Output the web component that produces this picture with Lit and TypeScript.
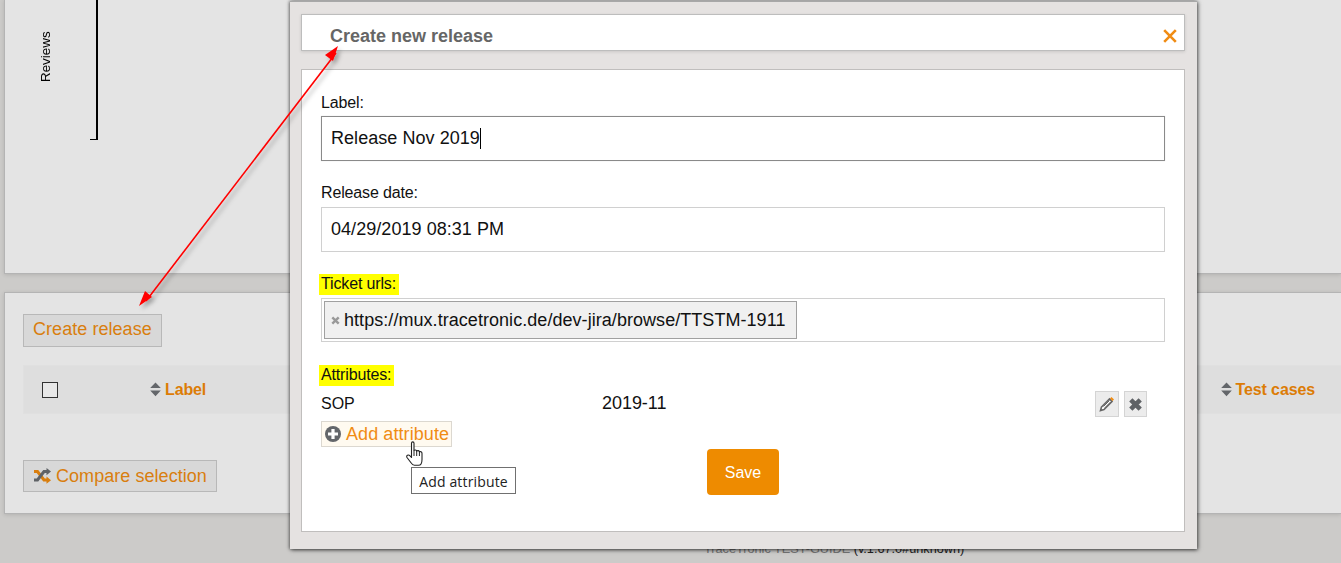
import { LitElement, html, css, svg } from "lit";
import { customElement } from "lit/decorators.js";

const sortIcon = html`<svg class="sort" width="11" height="15" viewBox="0 0 11 15"><path d="M5.5 0.5 L10.8 6 H0.2 Z M0.2 8.6 H10.8 L5.5 14.2 Z" fill="#63666a"/></svg>`;

@customElement("app-root")
export class AppRoot extends LitElement {
  static styles = css`
    :host { display: block; }
    * { box-sizing: border-box; }
    .page {
      position: relative; width: 1341px; height: 563px; overflow: hidden;
      background: #cccbc9; font-family: "Liberation Sans", Arial, sans-serif; color: #000;
      padding-left: 4px; display: flex; flex-direction: column;
    }
    .panel { background: #e4e4e4; border: 1px solid #b4b4b4; border-right: none; box-shadow: 0 1px 4px rgba(0,0,0,.12); }
    .top { height: 275px; margin-top: -1px; border-top: none; position: relative; display: flex; flex: none; }
    .axis { width: 93px; height: 141px; border-right: 2px solid #000; position: relative; flex: none; }
    .tick { position: absolute; right: -2px; bottom: 0; width: 8px; height: 1px; background: #000; }
    .reviews {
      position: absolute; left: 33px; top: 30px; height: 53px; writing-mode: vertical-rl; transform: rotate(180deg);
      font-size: 13.4px; line-height: 16px; text-align: left;
    }
    .bottom { height: 222px; flex: none; margin-top: 18px; padding: 21px 0 0 18px; display: flex; flex-direction: column; align-items: flex-start; }
    .btn {
      background: #d8d8d8; border: 1px solid #b8b8b8; color: #d97e0e; font-size: 18px; line-height: 20px;
      letter-spacing: .05px; display: flex; align-items: center;
    }
    .create { height: 33px; padding: 0 9px 4px 9px; }
    .thead {
      margin-top: 18px; width: 100%; height: 49px; background: #dedede; border: 1px solid #e0e0e0; border-right: none;
      display: flex; align-items: center; position: relative;
    }
    .check { width: 16px; height: 16px; border: 1px solid #333; background: #e8e8e8; margin-left: 18px; flex: none; }
    .th { display: flex; align-items: center; gap: 4px; font-weight: 700; font-size: 16px; letter-spacing: -.12px; color: #dc7c06; }
    .th-label { margin-left: 92px; }
    .th-tests { margin-left: auto; margin-right: 26px; }
    .compare { margin-top: 46px; height: 32px; padding: 0 9px; gap: 5px; }

    .footer { position: absolute; left: 704px; top: 542px; font-size: 12.7px; line-height: 14px; white-space: nowrap; color: #222; }
    .footer .dim { color: #777; }

    .modal {
      position: absolute; left: 290px; top: 1px; width: 907px; height: 548px; background: #e5e2e1;
      border-top: 1px solid #a8a8a8; box-shadow: 1px 1px 4px rgba(0,0,0,.65), -1px 0 3px rgba(0,0,0,.35);
      padding: 12px 12px 17px 11px; display: flex; flex-direction: column; gap: 18px;
    }
    .head {
      height: 37px; flex: none; background: #fff; border: 1px solid #bdbdbd; display: flex; align-items: center;
      justify-content: space-between; padding: 7px 7px 0 28px; box-shadow: 0 1px 3px rgba(0,0,0,.12);
    }
    .title { font-size: 18px; font-weight: 700; color: #666; }
    .body {
      flex: 1; background: #fff; border: 1px solid #c0bebd; padding: 24px 19px 0 19px; display: flex; flex-direction: column;
    }
    .lab { font-size: 16px; line-height: 18px; color: #111; align-self: flex-start; letter-spacing: -.15px; }
    .mark { background: #ffff00; padding: 2px 3px 3px 2px; margin-left: -2px; line-height: 16px; }
    .input {
      margin-top: 5px; height: 45px; border: 1px solid #d0d0d0; display: flex; align-items: center; padding-left: 9px;
      font-size: 18px; letter-spacing: .05px; color: #111; flex: none;
    }
    .input.focus { border-color: #8a8a8a; margin-top: 4px; box-shadow: 0 0 1px rgba(0,0,0,.15); }
    .caret { width: 1px; height: 21px; background: #000; margin-left: 0; }
    .sec2 { margin-top: 23px; }
    .sec3 { margin-top: 22px; }
    .ticket { height: 44px; padding-left: 2px; margin-top: 3px; }
    .chip {
      height: 38px; border: 1px solid #a0a0a0; background: #f0f0f0; display: flex; align-items: center;
      padding: 0 11px 0 6px; gap: 4px; font-size: 18px; white-space: nowrap;
    }
    .sec4 { margin-top: 23px; }
    .row { margin-top: 4px; height: 28px; display: flex; align-items: center; position: relative; font-size: 16px; color: #111; }
    .k { width: 281px; }
    .v { font-size: 18px; letter-spacing: -.05px; padding-bottom: 2px; }
    .actions { margin-left: auto; margin-right: 18px; display: flex; gap: 5px; }
    .act {
      height: 26px; background: #ececec; border: 1px solid #d4d4d4; display: flex; align-items: center; justify-content: center;
    }
    .act-edit { width: 24px; }
    .act-del { width: 23px; }
    .add {
      margin-top: 3px; align-self: flex-start; height: 26px; width: 131px; border: 1px solid #dcd8d0; background: #fffaf0;
      color: #f08c14; font-size: 18px; letter-spacing: .08px; display: flex; align-items: center; padding-left: 3px; gap: 5px; white-space: nowrap;
    }
    .save {
      margin-top: 2px; margin-left: 386px; width: 72px; height: 46px; border-radius: 4px; background: #ee8b00; color: #fff;
      font-size: 16px; padding-top: 1px; display: flex; align-items: center; justify-content: center; align-self: flex-start;
    }
    .tooltip {
      position: absolute; left: 411px; top: 467px; width: 105px; height: 27px; background: #fff; border: 1px solid #707070;
      font-family: "Open Sans", "Noto Sans", sans-serif; font-size: 14px; letter-spacing: .15px; padding-top: 1px;
      display: flex; align-items: center; justify-content: center; color: #222;
    }
    .cursor { position: absolute; left: 404px; top: 440px; }
    .overlay { position: absolute; left: 0; top: 0; pointer-events: none; }
  `;

  render() {
    return html`
      <div class="page">
        <section class="panel top">
          <div class="axis"><span class="tick"></span></div>
          <span class="reviews">Reviews</span>
        </section>
        <section class="panel bottom">
          <div class="btn create">Create release</div>
          <div class="thead">
            <span class="check"></span>
            <span class="th th-label">${sortIcon}Label</span>
            <span class="th th-tests">${sortIcon}Test cases</span>
          </div>
          <div class="btn compare">
            <svg width="18" height="16" viewBox="0 0 18 16">
              <path d="M1 3.5h3.5l6.5 8.5h3" fill="none" stroke="#d97e0e" stroke-width="3"/>
              <path d="M1 12h3.5l6.5-8.5h3" fill="none" stroke="#5f6266" stroke-width="3"/>
              <path d="M13.5 0L18 3.6L13.5 7.2Z" fill="#5f6266"/>
              <path d="M13.5 8.6L18 12.2L13.5 15.8Z" fill="#d97e0e"/>
            </svg>
            Compare selection
          </div>
        </section>
        <div class="footer"><span class="dim">TraceTronic TEST-GUIDE</span> (v.1.67.0#unknown)</div>

        <div class="modal">
          <div class="head">
            <span class="title">Create new release</span>
            <svg width="14" height="14" viewBox="0 0 14 14"><path d="M1.2 1.2L12.8 12.8M12.8 1.2L1.2 12.8" stroke="#f08c14" stroke-width="2.6" fill="none"/></svg>
          </div>
          <div class="body">
            <div class="lab">Label:</div>
            <div class="input focus">Release Nov 2019<span class="caret"></span></div>
            <div class="lab sec2">Release date:</div>
            <div class="input">04/29/2019 08:31 PM</div>
            <div class="lab mark sec3">Ticket urls:</div>
            <div class="input ticket">
              <div class="chip">
                <svg width="9" height="9" viewBox="0 0 9 9"><path d="M1.3 1.3L7.7 7.7M7.7 1.3L1.3 7.7" stroke="#999" stroke-width="2.4"/></svg>
                https://mux.tracetronic.de/dev-jira/browse/TTSTM-1911
              </div>
            </div>
            <div class="lab mark sec4">Attributes:</div>
            <div class="row">
              <span class="k">SOP</span><span class="v">2019-11</span>
              <div class="actions">
                <span class="act act-edit">
                  <svg width="16" height="16" viewBox="0 0 16 16">
                    <path d="M2.5 11L10.5 3L13 5.5L5 13.5L1.5 14.5Z" fill="#fff" stroke="#666" stroke-width="1.6"/>
                    <path d="M4.5 10.5L10.5 4.5M5.8 11.8L11.8 5.8" stroke="#666" stroke-width="1"/>
                    <path d="M11 2.5L12.5 1L15 3.5L13.5 5Z" fill="#f08c14"/>
                  </svg>
                </span>
                <span class="act act-del">
                  <svg width="15" height="15" viewBox="0 0 15 15"><path d="M2.8 2.8L12.2 12.2M12.2 2.8L2.8 12.2" stroke="#5f6266" stroke-width="4.6" fill="none"/></svg>
                </span>
              </div>
            </div>
            <div class="add">
              <svg width="16" height="16" viewBox="0 0 16 16"><circle cx="8" cy="8" r="8" fill="#63666a"/><path d="M8 3V13M3 8H13" stroke="#fff" stroke-width="3.2"/></svg>
              Add attribute
            </div>
            <div class="save">Save</div>
          </div>
        </div>

        <div class="tooltip">Add attribute</div>
        <svg class="cursor" width="22" height="28" viewBox="0 0 22 28">
          <path d="M7.5 3.2C7.5 1.4 10 1.4 10 3.2V10.5C10.8 9.6 12.4 9.8 12.7 11C13.6 10.2 15.2 10.6 15.4 11.8C16.4 11.3 18 11.9 18 13.4V19.5C18 22.5 17 25.3 14.5 25.3H10.5C8.8 25.3 7.8 24 6.8 22.5L3 17.5C1.8 15.5 4.4 14 6 15.8L7.5 17.5Z" fill="#fff" stroke="#222" stroke-width="1.1" stroke-linejoin="round"/>
          <path d="M10 10.5V16M12.7 11V16M15.4 11.8V16" stroke="#222" stroke-width="1" fill="none"/>
        </svg>

        <svg class="overlay" width="1341" height="563" viewBox="0 0 1341 563">
          <defs>
            <filter id="s" x="-20%" y="-20%" width="140%" height="140%"><feDropShadow dx="3" dy="3" stdDeviation="2" flood-color="#000" flood-opacity=".3"/></filter>
          </defs>
          ${svg`<g filter="url(#s)">
            <path d="M336 53L146 301" stroke="#f00" stroke-width="1.6" fill="none"/>
            <path d="M338 46L325 55L333 61Z" fill="#f00"/>
            <path d="M139 306L152 297L145 291Z" fill="#f00"/>
          </g>`}
        </svg>
      </div>
    `;
  }
}
